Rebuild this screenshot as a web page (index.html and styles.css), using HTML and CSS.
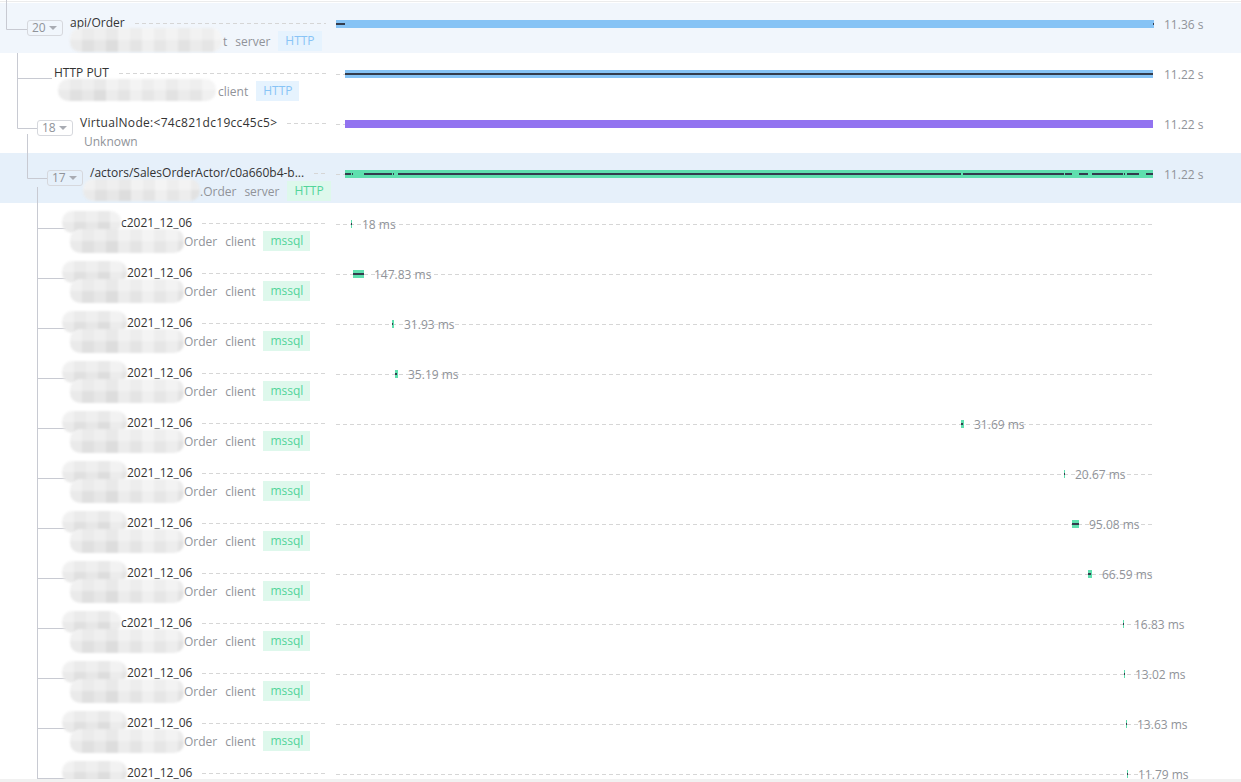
FILE: index.html
```html
<!DOCTYPE html>
<html lang="en">
<head>
<meta charset="utf-8">
<title>Trace</title>
<link rel="stylesheet" href="styles.css">
</head>
<body>
<div class="page">
  <svg class="guides" width="80" height="782" viewBox="0 0 80 782">
    <path d="M6.5 0V29.5H27 M17.5 53V128.5H37 M17.5 78.5H52 M27.5 134V178.5H47 M37.5 187V779 M37.5 228.5H66 M37.5 278.5H66 M37.5 328.5H66 M37.5 378.5H66 M37.5 428.5H66 M37.5 478.5H66 M37.5 528.5H66 M37.5 578.5H66 M37.5 628.5H66 M37.5 678.5H66 M37.5 728.5H66 M37.5 778.5H66" fill="none" stroke="#c8cad2" stroke-width="1"/>
  </svg>
  <div class="topline"></div>
  <div class="list">

    <div class="row hl-a">
      <div class="tree lvl0">
        <span class="toggle">20<i class="caret"></i></span>
        <div class="info">
          <div class="title"><span class="name">api/Order</span><span class="fill"></span></div>
          <div class="meta"><span class="mask mk-r1"></span><span>t</span><span class="kind">server</span><span class="tag http">HTTP</span></div>
        </div>
      </div>
      <div class="timeline">
        <div class="track">
          <div class="bar blue" style="margin-left:0px;width:818px"><i class="self" style="left:0px;width:9px"></i><i class="self" style="left:817px;width:1px"></i></div>
        </div>
      </div>
      <div class="dur">11.36 s</div>
    </div>

    <div class="row">
      <div class="tree leaf1">
        <div class="info">
          <div class="title"><span class="name">HTTP PUT</span><span class="fill"></span></div>
          <div class="meta"><span class="mask mk-r2"></span><span>client</span><span class="tag http">HTTP</span></div>
        </div>
      </div>
      <div class="timeline">
        <div class="track">
          <div class="bar blue" style="margin-left:9px;width:808px"><i class="self" style="left:0px;width:808px"></i></div>
        </div>
      </div>
      <div class="dur">11.22 s</div>
    </div>

    <div class="row">
      <div class="tree lvl1">
        <span class="toggle">18<i class="caret"></i></span>
        <div class="info">
          <div class="title"><span class="name wide">VirtualNode:&lt;74c821dc19cc45c5&gt;</span><span class="fill"></span></div>
          <div class="meta"><span class="unknown">Unknown</span></div>
        </div>
      </div>
      <div class="timeline">
        <div class="track">
          <div class="bar purple" style="margin-left:9px;width:808px"></div>
        </div>
      </div>
      <div class="dur">11.22 s</div>
    </div>

    <div class="row hl-b">
      <div class="tree lvl2">
        <span class="toggle">17<i class="caret"></i></span>
        <div class="info">
          <div class="title"><span class="name">/actors/SalesOrderActor/c0a660b4-b...</span><span class="fill"></span></div>
          <div class="meta"><span class="mask mk-r4"></span><span>.Order</span><span class="kind">server</span><span class="tag sql">HTTP</span></div>
        </div>
      </div>
      <div class="timeline">
        <div class="track">
          <div class="bar green" style="margin-left:9px;width:808px"><i class="self" style="left:0px;width:6px"></i><i class="self" style="left:7px;width:1px"></i><i class="self" style="left:19px;width:28px"></i><i class="self" style="left:48px;width:1px"></i><i class="self" style="left:53px;width:563px"></i><i class="self" style="left:618px;width:101px"></i><i class="self" style="left:720px;width:7px"></i><i class="self" style="left:734px;width:9px"></i><i class="self" style="left:747px;width:31px"></i><i class="self" style="left:779px;width:1px"></i><i class="self" style="left:782px;width:12px"></i><i class="self" style="left:801px;width:7px"></i></div>
        </div>
      </div>
      <div class="dur">11.22 s</div>
    </div>

    <div class="row">
      <div class="tree leaf3">
        <div class="info">
          <div class="title"><span class="mask mk-t mk-t59"></span><span class="name">c2021_12_06</span><span class="fill"></span></div>
          <div class="meta"><span class="mask mk-m"></span><span>Order</span><span class="kind">client</span><span class="tag sql">mssql</span></div>
        </div>
      </div>
      <div class="timeline">
        <div class="track">
          <div class="bar green" style="margin-left:15px;width:1px"><i class="self" style="left:0;width:1px"></i></div>
          <span class="lbl">18 ms</span>
        </div>
      </div>
    </div>

    <div class="row">
      <div class="tree leaf3">
        <div class="info">
          <div class="title"><span class="mask mk-t"></span><span class="name">2021_12_06</span><span class="fill"></span></div>
          <div class="meta"><span class="mask mk-m"></span><span>Order</span><span class="kind">client</span><span class="tag sql">mssql</span></div>
        </div>
      </div>
      <div class="timeline">
        <div class="track">
          <div class="bar green" style="margin-left:17px;width:11px"><i class="self" style="left:0;width:11px"></i></div>
          <span class="lbl">147.83 ms</span>
        </div>
      </div>
    </div>

    <div class="row">
      <div class="tree leaf3">
        <div class="info">
          <div class="title"><span class="mask mk-t"></span><span class="name">2021_12_06</span><span class="fill"></span></div>
          <div class="meta"><span class="mask mk-m"></span><span>Order</span><span class="kind">client</span><span class="tag sql">mssql</span></div>
        </div>
      </div>
      <div class="timeline">
        <div class="track">
          <div class="bar green" style="margin-left:56px;width:2px"><i class="self" style="left:0;width:1px"></i></div>
          <span class="lbl">31.93 ms</span>
        </div>
      </div>
    </div>

    <div class="row">
      <div class="tree leaf3">
        <div class="info">
          <div class="title"><span class="mask mk-t"></span><span class="name">2021_12_06</span><span class="fill"></span></div>
          <div class="meta"><span class="mask mk-m"></span><span>Order</span><span class="kind">client</span><span class="tag sql">mssql</span></div>
        </div>
      </div>
      <div class="timeline">
        <div class="track">
          <div class="bar green" style="margin-left:59px;width:3px"><i class="self" style="left:0;width:2px"></i></div>
          <span class="lbl">35.19 ms</span>
        </div>
      </div>
    </div>

    <div class="row">
      <div class="tree leaf3">
        <div class="info">
          <div class="title"><span class="mask mk-t"></span><span class="name">2021_12_06</span><span class="fill"></span></div>
          <div class="meta"><span class="mask mk-m"></span><span>Order</span><span class="kind">client</span><span class="tag sql">mssql</span></div>
        </div>
      </div>
      <div class="timeline">
        <div class="track">
          <div class="bar green" style="margin-left:625px;width:3px"><i class="self" style="left:0;width:2px"></i></div>
          <span class="lbl">31.69 ms</span>
        </div>
      </div>
    </div>

    <div class="row">
      <div class="tree leaf3">
        <div class="info">
          <div class="title"><span class="mask mk-t"></span><span class="name">2021_12_06</span><span class="fill"></span></div>
          <div class="meta"><span class="mask mk-m"></span><span>Order</span><span class="kind">client</span><span class="tag sql">mssql</span></div>
        </div>
      </div>
      <div class="timeline">
        <div class="track">
          <div class="bar green" style="margin-left:728px;width:1px"><i class="self" style="left:0;width:1px"></i></div>
          <span class="lbl">20.67 ms</span>
        </div>
      </div>
    </div>

    <div class="row">
      <div class="tree leaf3">
        <div class="info">
          <div class="title"><span class="mask mk-t"></span><span class="name">2021_12_06</span><span class="fill"></span></div>
          <div class="meta"><span class="mask mk-m"></span><span>Order</span><span class="kind">client</span><span class="tag sql">mssql</span></div>
        </div>
      </div>
      <div class="timeline">
        <div class="track">
          <div class="bar green" style="margin-left:736px;width:7px"><i class="self" style="left:0;width:7px"></i></div>
          <span class="lbl">95.08 ms</span>
        </div>
      </div>
    </div>

    <div class="row">
      <div class="tree leaf3">
        <div class="info">
          <div class="title"><span class="mask mk-t"></span><span class="name">2021_12_06</span><span class="fill"></span></div>
          <div class="meta"><span class="mask mk-m"></span><span>Order</span><span class="kind">client</span><span class="tag sql">mssql</span></div>
        </div>
      </div>
      <div class="timeline">
        <div class="track">
          <div class="bar green" style="margin-left:752px;width:4px"><i class="self" style="left:0;width:3px"></i></div>
          <span class="lbl">66.59 ms</span>
        </div>
      </div>
    </div>

    <div class="row">
      <div class="tree leaf3">
        <div class="info">
          <div class="title"><span class="mask mk-t mk-t59"></span><span class="name">c2021_12_06</span><span class="fill"></span></div>
          <div class="meta"><span class="mask mk-m"></span><span>Order</span><span class="kind">client</span><span class="tag sql">mssql</span></div>
        </div>
      </div>
      <div class="timeline">
        <div class="track">
          <div class="bar green" style="margin-left:787px;width:1px"><i class="self" style="left:0;width:1px"></i></div>
          <span class="lbl">16.83 ms</span>
        </div>
      </div>
    </div>

    <div class="row">
      <div class="tree leaf3">
        <div class="info">
          <div class="title"><span class="mask mk-t"></span><span class="name">2021_12_06</span><span class="fill"></span></div>
          <div class="meta"><span class="mask mk-m"></span><span>Order</span><span class="kind">client</span><span class="tag sql">mssql</span></div>
        </div>
      </div>
      <div class="timeline">
        <div class="track">
          <div class="bar green" style="margin-left:788px;width:1px"><i class="self" style="left:0;width:1px"></i></div>
          <span class="lbl">13.02 ms</span>
        </div>
      </div>
    </div>

    <div class="row">
      <div class="tree leaf3">
        <div class="info">
          <div class="title"><span class="mask mk-t"></span><span class="name">2021_12_06</span><span class="fill"></span></div>
          <div class="meta"><span class="mask mk-m"></span><span>Order</span><span class="kind">client</span><span class="tag sql">mssql</span></div>
        </div>
      </div>
      <div class="timeline">
        <div class="track">
          <div class="bar green" style="margin-left:790px;width:1px"><i class="self" style="left:0;width:1px"></i></div>
          <span class="lbl">13.63 ms</span>
        </div>
      </div>
    </div>

    <div class="row">
      <div class="tree leaf3">
        <div class="info">
          <div class="title"><span class="mask mk-t"></span><span class="name">2021_12_06</span><span class="fill"></span></div>
        </div>
      </div>
      <div class="timeline">
        <div class="track">
          <div class="bar green" style="margin-left:791px;width:1px"><i class="self" style="left:0;width:1px"></i></div>
          <span class="lbl">11.79 ms</span>
        </div>
      </div>
    </div>

  </div>
  <div class="hscroll"></div>
</div>
</body>
</html>
```

FILE: styles.css
```css
html, body {
  margin: 0;
  padding: 0;
}

body {
  width: 1241px;
  height: 782px;
  overflow: hidden;
  background: #ffffff;
  color: #333333;
  font-family: "Open Sans", "Liberation Sans", sans-serif;
  font-size: 12px;
}

.page {
  position: relative;
  height: 782px;
  display: flex;
  flex-direction: column;
}

.guides {
  position: absolute;
  top: 0;
  left: 0;
  z-index: 0;
  pointer-events: none;
}

.topline {
  flex: none;
  height: 1px;
  margin: 1px 0;
  background: #ececec;
}

.list {
  flex: 1;
  min-height: 0;
  overflow: hidden;
}

.hscroll {
  flex: none;
  height: 3px;
  background: #f1f1f1;
}

.row {
  display: flex;
  height: 50px;
}

.row.hl-a {
  background: #f1f6fc;
}

.row.hl-b {
  background: #e6f0fa;
}

/* left tree column */
.tree {
  flex: none;
  width: 326px;
  box-sizing: border-box;
  display: flex;
  align-items: flex-start;
}

.lvl0 { padding-left: 27px; }
.lvl1 { padding-left: 37px; }
.lvl2 { padding-left: 47px; }
.leaf1 { padding-left: 54px; }
.leaf3 { padding-left: 62px; }

.toggle {
  flex: none;
  width: 36px;
  height: 16px;
  margin-top: 17px;
  margin-right: 7px;
  box-sizing: border-box;
  border: 1px solid #d6d8dd;
  border-radius: 3px;
  padding: 0 5px 0 4px;
  display: flex;
  align-items: center;
  color: #909399;
  line-height: 14px;
}

.caret {
  margin-left: auto;
  width: 0;
  height: 0;
  border-left: 4px solid transparent;
  border-right: 4px solid transparent;
  border-top: 4px solid #a9acb3;
}

.info {
  flex: 1;
  min-width: 0;
  padding-top: 12px;
}

.title {
  display: flex;
  align-items: flex-start;
  height: 16px;
  line-height: 16px;
  white-space: nowrap;
}

.name {
  flex: none;
  color: #333333;
}

.name.wide {
  letter-spacing: 0.3px;
}

.fill {
  flex: 1;
  height: 1px;
  margin-left: 10px;
  margin-top: 8px;
  background: linear-gradient(to right, #d6d6d6 0 4px, transparent 4px) 0 0 / 7px 1px repeat-x;
}

.meta {
  display: flex;
  align-items: center;
  height: 20px;
  color: #909399;
  white-space: nowrap;
}

.kind {
  margin-left: 8px;
}

.unknown {
  margin-left: 4px;
}

.tag {
  margin-left: 8px;
  height: 20px;
  line-height: 20px;
  padding: 0 7px;
}

.tag.http {
  background: #e6f3fe;
  color: #88c4f6;
}

.tag.sql {
  background: #def8ec;
  color: #52d59a;
}

/* censored (pixelated) areas */
.mask {
  position: relative;
  z-index: 1;
  flex: none;
  display: inline-block;
  height: 22px;
  border-radius: 10px;
  background:
    linear-gradient(to bottom, rgba(255,255,255,0.35) 0 50%, rgba(255,255,255,0) 50%),
    linear-gradient(to right, #eaeaea 0 12px, #e0e0e0 12px 24px, #e7e7e7 24px 36px, #dddddd 36px 48px, #ececec 48px 60px, #e4e4e4 60px 72px, #efefef 72px 84px, #e6e6e6 84px 96px, #ededed 96px 108px, #e2e2e2 108px 120px, #ebebeb 120px 132px, #e5e5e5 132px 144px, #f0f0f0 144px);
  filter: blur(1.2px);
}

.mk-r1 { width: 152px; margin: -2px 1px 0 0; height: 24px; }
.mk-r2 { width: 158px; margin: -2px 2px 0 4px; height: 22px; }
.mk-r4 { width: 117px; margin: -2px 0 0 -7px; height: 22px; }
.mk-t { width: 65px; margin-top: -4px; height: 22px; }
.mk-t59 { width: 59px; }
.mk-m { width: 114px; margin: 0 0 0 8px; height: 24px; }

/* timeline */
.timeline {
  flex: none;
  width: 818px;
  margin-left: 10px;
  background: linear-gradient(to right, #d6d6d6 0 4px, transparent 4px) 0 21px / 7px 1px repeat-x;
}

.track {
  display: flex;
  align-items: center;
  height: 8px;
  margin-top: 17px;
}

.bar {
  position: relative;
  flex: none;
  height: 8px;
}

.bar.blue { background: #86c3f5; }
.bar.purple { background: #9273f0; }
.bar.green { background: #5fdfae; }

.self {
  position: absolute;
  top: 3px;
  height: 2px;
  background: #333c4d;
}

.lbl {
  flex: none;
  margin-left: 10px;
  margin-top: 2px;
  line-height: 16px;
  color: #909399;
  white-space: nowrap;
}

.dur {
  flex: none;
  margin-left: 10px;
  padding-top: 14px;
  line-height: 16px;
  color: #909399;
  white-space: nowrap;
}
```
